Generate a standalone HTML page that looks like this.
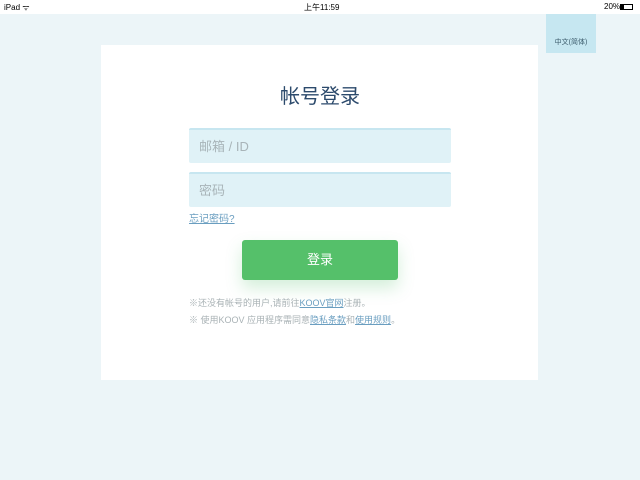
<!DOCTYPE html>
<html><head><meta charset="utf-8"><style>
*{margin:0;padding:0;box-sizing:border-box}
body{width:640px;height:480px;background:#ecf5f8;position:relative;overflow:hidden;font-family:"Liberation Sans","Noto Sans CJK SC",sans-serif}
.sb{position:absolute;top:0;left:0;width:640px;height:14px;background:#fff;font-size:8px;color:#000}
.abs{position:absolute}
.card{position:absolute;left:101px;top:45px;width:437px;height:335px;background:#fff}
.lang{position:absolute;left:546px;top:14px;width:50px;height:39px;background:#c6e7f1;font-size:7px;color:#3a5a6a;text-align:center;padding-top:23px}
.inp{position:absolute;left:189px;width:262px;height:35px;background:#e0f2f7;border-top:2px solid #c7e6f0;border-radius:2px;font-size:13px;color:#a8b4b8;padding:6px 0 0 10px}
.btn{position:absolute;left:242px;top:240px;width:156px;height:40px;background:#55c06a;border-radius:3px;color:#fff;font-size:13px;text-align:center;line-height:40px;box-shadow:0 8px 16px rgba(85,192,106,.25)}
.note{position:absolute;left:189px;font-size:9px;color:#a9b2b5}
.note a{color:#6a9ec0;text-decoration:underline}
</style></head><body>
<div class="sb"><span class="abs" style="left:4px;top:2px">iPad ᯤ</span><span class="abs" style="left:304px;top:2px">上午11:59</span><span class="abs" style="left:604px;top:2px">20%</span><span class="abs" style="left:620px;top:4px;width:13px;height:6px;border:1px solid #000"><span class="abs" style="left:0;top:0;width:3px;height:4px;background:#000"></span></span></div>
<div class="lang">中文(简体)</div>
<div class="card"></div>
<div class="abs" style="left:0;width:640px;top:80px;text-align:center;font-size:20px;color:#2c4a6c">帐号登录</div>
<div class="inp" style="top:128px">邮箱 / ID</div>
<div class="inp" style="top:172px">密码</div>
<div class="abs" style="left:189px;top:210px;font-size:10px;color:#6a9ec0;text-decoration:underline">忘记密码?</div>
<div class="btn">登录</div>
<div class="note" style="top:296px">※还没有帐号的用户,请前往<a>KOOV官网</a>注册。</div>
<div class="note" style="top:313px">※ 使用KOOV 应用程序需同意<a>隐私条款</a>和<a>使用规则</a>。</div>
</body></html>
